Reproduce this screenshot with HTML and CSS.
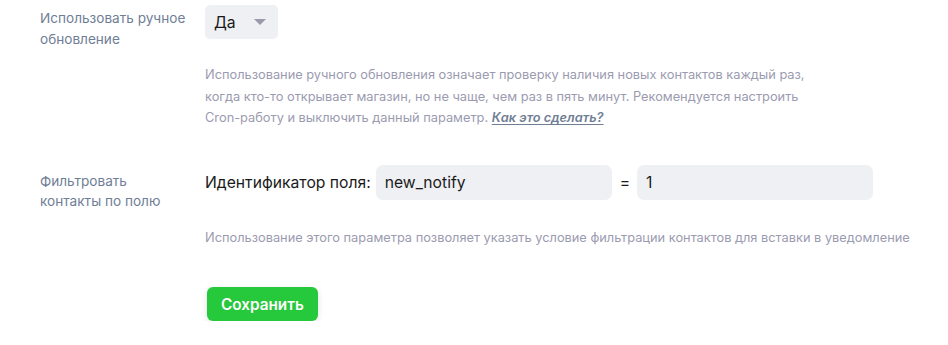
FILE: index.html
```html
<!DOCTYPE html>
<html lang="ru">
<head>
    <meta charset="UTF-8">
    <title>Настройки</title>
<link rel="stylesheet" href="styles.css">
</head>
<body>
    <div class="settings">
        <div class="field">
            <div class="name">Использовать ручное обновление</div>
            <div class="value">
                <div class="select">
                    <span>Да</span>
                    <span class="caret"></span>
                </div>
                <p class="hint">Использование ручного обновления означает проверку наличия новых контактов каждый раз, когда кто-то открывает магазин, но не чаще, чем раз в пять минут. Рекомендуется настроить Cron-работу и выключить данный параметр. <a href="#">Как это сделать?</a></p>
            </div>
        </div>
        <div class="field">
            <div class="name low">Фильтровать контакты по полю</div>
            <div class="value">
                <div class="filter">
                    <span>Идентификатор поля:</span>
                    <div class="input">new_notify</div>
                    <span class="eq">=</span>
                    <div class="input">1</div>
                </div>
                <p class="hint wide">Использование этого параметра позволяет указать условие фильтрации контактов для вставки в уведомление</p>
            </div>
        </div>
        <div class="actions">
            <button class="save">Сохранить</button>
        </div>
    </div>
</body>
</html>
```

FILE: styles.css
```css
body{
    margin: 0;
    background-color: #fff;
    font-family: Inter, "Noto Sans", sans-serif;
    color: #1a1a1a;
}
.settings{
    padding: 5px 0 0 40px;
}
.field{
    display: flex;
    margin-bottom: 36px;
}
.name{
    width: 150px;
    margin-right: 15px;
    font-size: 13.6px;
    line-height: 21px;
    color: #6f7e95;
    padding-top: 3px;
}
.name.low{
    line-height: 20px;
    padding-top: 6px;
}
.value{
    flex: 1;
}
/*select*/
.select{
    display: flex;
    align-items: center;
    justify-content: space-between;
    box-sizing: border-box;
    width: 73px;
    height: 34px;
    padding: 0 12px 0 9px;
    background-color: #eff0f4;
    border-radius: 5px;
    font-size: 15.7px;
}
.caret{
    width: 0;
    height: 0;
    border-left: 6px solid transparent;
    border-right: 6px solid transparent;
    border-top: 6px solid #9a99ad;
}
/*hint*/
.hint{
    margin: 25px 0 0 0;
    width: 620px;
    font-size: 12.8px;
    line-height: 21.5px;
    color: #9b9bb0;
}
.hint a{
    color: #6f7e95;
    font-weight: 600;
    font-style: italic;
    text-underline-offset: 2px;
}
.hint.wide{
    width: auto;
    margin-top: 27px;
}
/*filter*/
.filter{
    display: flex;
    align-items: center;
    gap: 5px;
    font-size: 15.7px;
}
.input{
    box-sizing: border-box;
    width: 236px;
    height: 35px;
    line-height: 35px;
    padding: 0 9px;
    background-color: #eff0f4;
    border-radius: 7px;
}
.eq{
    margin: 0 2px 0 3px;
}
/*save*/
.actions{
    padding-left: 167px;
    margin-top: 39px;
}
.save{
    height: 34px;
    padding: 0 14px;
    border: none;
    border-radius: 6px;
    background-color: #26c83c;
    color: #fff;
    font-family: Inter, sans-serif;
    font-size: 15.3px;
    font-weight: 600;
    box-shadow: 0 2px 6px rgba(0, 0, 0, 0.12);
}
```
